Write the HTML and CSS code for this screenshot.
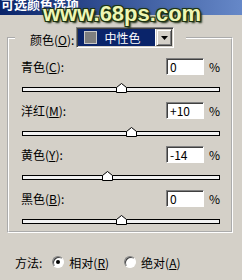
FILE: index.html
```html
<!DOCTYPE html>
<html lang="zh">
<head>
    <meta charset="UTF-8">
    <title>可选颜色选项</title>
    <link rel="stylesheet" href="styles.css">
</head>
<body>

<div class="titlebar"><span class="title">可选颜色选项</span></div>
<div class="watermark">www.68ps.com</div>

<fieldset class="group">
    <legend>
        <span class="legend-inner">
            <span class="label">颜色(<u>O</u>):</span>
            <span class="select">
                <span class="select-value"><span class="swatch"></span>中性色</span>
                <span class="select-btn">
                    <svg width="7" height="4" viewBox="0 0 7 4"><path d="M0 0 H7 L3.5 4 Z" fill="#000"/></svg>
                </span>
            </span>
        </span>
    </legend>

    <div class="row">
        <span class="label">青色(<u>C</u>):</span>
        <span class="field">0</span>
        <span class="pct">%</span>
    </div>
    <div class="track"><span class="thumb" style="left: 50%"><svg width="11" height="10" viewBox="0 0 11 10"><path d="M0.5 9.5 V4.5 L5.5 0.5 L10.5 4.5 V9.5 Z" fill="#fff" stroke="#000"/></svg></span></div>

    <div class="row">
        <span class="label">洋红(<u>M</u>):</span>
        <span class="field">+10</span>
        <span class="pct">%</span>
    </div>
    <div class="track"><span class="thumb" style="left: 55%"><svg width="11" height="10" viewBox="0 0 11 10"><path d="M0.5 9.5 V4.5 L5.5 0.5 L10.5 4.5 V9.5 Z" fill="#fff" stroke="#000"/></svg></span></div>

    <div class="row">
        <span class="label">黄色(<u>Y</u>):</span>
        <span class="field">-14</span>
        <span class="pct">%</span>
    </div>
    <div class="track"><span class="thumb" style="left: 43%"><svg width="11" height="10" viewBox="0 0 11 10"><path d="M0.5 9.5 V4.5 L5.5 0.5 L10.5 4.5 V9.5 Z" fill="#fff" stroke="#000"/></svg></span></div>

    <div class="row">
        <span class="label">黑色(<u>B</u>):</span>
        <span class="field">0</span>
        <span class="pct">%</span>
    </div>
    <div class="track last"><span class="thumb" style="left: 50%"><svg width="11" height="10" viewBox="0 0 11 10"><path d="M0.5 9.5 V4.5 L5.5 0.5 L10.5 4.5 V9.5 Z" fill="#fff" stroke="#000"/></svg></span></div>
</fieldset>

<div class="method">
    <span class="method-label">方法:</span>
    <span class="radio checked"></span>
    <span class="radio-text">相对(<u>R</u>)</span>
    <span class="radio"></span>
    <span class="radio-text">绝对(<u>A</u>)</span>
</div>

</body>
</html>
```

FILE: styles.css
```css
body {
    margin: 0;
    width: 242px;
    height: 280px;
    overflow: hidden;
    position: relative;
    background-color: #d4d0c8;
    font-family: "Noto Sans CJK SC", "Liberation Sans", sans-serif;
    font-size: 12px;
    color: #000;
}
u {
    text-underline-offset: 1px;
}
.titlebar {
    height: 15px;
    overflow: hidden;
    background: linear-gradient(to right, #0a246a, #6688c8);
}
.title {
    display: block;
    margin-top: -5px;
    padding-left: 1px;
    color: #fff;
    font-size: 13px;
    font-weight: bold;
    line-height: 18px;
}
.watermark {
    position: absolute;
    left: 43px;
    top: 1px;
    font-family: "Liberation Sans", Arial, sans-serif;
    font-weight: bold;
    font-size: 22px;
    color: #eef6b4;
    text-shadow: -1px -1px 0 #1d3312, 1px -1px 0 #1d3312, -1px 1px 0 #1d3312, 1px 1px 0 #1d3312, 0 0 3px #2c4a1a, 2px 2px 2px #102008;
}
.group {
    margin: 12px 9px 0 7px;
    padding: 10px 11px 7px 12px;
    border: 2px groove #fff;
}
.group legend {
    margin-left: -6px;
    padding: 0 12px 0 15px;
}
.legend-inner {
    display: flex;
    align-items: center;
    height: 21px;
}
.legend-inner .label {
    margin-right: 2px;
    padding-top: 3px;
}
.select {
    display: flex;
    width: 98px;
    height: 21px;
    box-sizing: border-box;
    border: 1px solid;
    border-color: #808080 #fff #fff #808080;
    box-shadow: inset 1px 1px #404040, inset -1px -1px #d4d0c8;
    padding: 1px;
    background-color: #fff;
}
.select-value {
    flex: 1;
    display: flex;
    align-items: center;
    background-color: #0a246a;
    color: #fff;
    padding-left: 6px;
    margin-right: 1px;
}
.swatch {
    width: 13px;
    height: 13px;
    box-sizing: border-box;
    border: 1px solid #c8c8c8;
    background-color: #7f7f7f;
    margin-right: 7px;
}
.select-btn {
    width: 16px;
    box-sizing: border-box;
    display: flex;
    align-items: center;
    justify-content: center;
    background-color: #d4d0c8;
    border: 1px solid;
    border-color: #d4d0c8 #404040 #404040 #d4d0c8;
    box-shadow: inset 1px 1px #fff, inset -1px -1px #808080;
}
.row {
    display: flex;
    align-items: center;
    height: 17px;
    margin-bottom: 12px;
}
.row .label {
    flex: 1;
}
.field {
    width: 38px;
    height: 17px;
    box-sizing: border-box;
    border: 1px solid;
    border-color: #808080 #fff #fff #808080;
    box-shadow: inset 1px 1px #404040;
    background-color: #fff;
    padding-left: 3px;
    line-height: 15px;
    margin-right: 5px;
}
.pct {
    width: 11px;
}
.track {
    position: relative;
    height: 5px;
    box-sizing: border-box;
    border: 1px solid #000;
    background-color: #f2f2f2;
    margin: 0 0 10px 1px;
}
.track.last {
    margin-bottom: 0;
}
.thumb {
    position: absolute;
    top: -5px;
    margin-left: -5px;
    width: 11px;
    height: 10px;
    display: block;
}
.thumb svg {
    display: block;
}
.method {
    display: flex;
    align-items: center;
    height: 14px;
    margin-top: 22px;
    padding-left: 15px;
}
.method-label {
    margin-right: 10px;
}
.radio {
    width: 12px;
    height: 12px;
    box-sizing: border-box;
    border-radius: 50%;
    border: 1px solid;
    border-color: #808080 #fff #fff #808080;
    box-shadow: inset 1px 1px #404040;
    background-color: #fff;
    display: flex;
    align-items: center;
    justify-content: center;
    margin-right: 5px;
}
.radio.checked::after {
    content: "";
    width: 4px;
    height: 4px;
    border-radius: 50%;
    background-color: #000;
}
.radio-text {
    margin-right: 15px;
}
```
